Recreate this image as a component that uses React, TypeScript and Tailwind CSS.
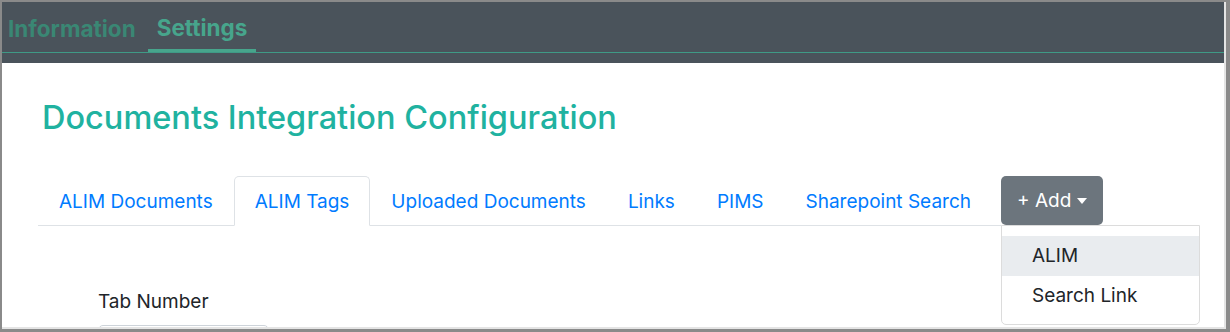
import React from "react";

export default function App() {
  const tabs = ["ALIM Documents", "ALIM Tags", "Uploaded Documents", "Links", "PIMS", "Sharepoint Search"];
  return (
    <div className="w-[1230px] h-[332px] overflow-hidden bg-[#8a8a8a] pl-[2px] pt-[2px] pr-[4px] pb-[3px]" style={{ fontFamily: "Inter, 'Noto Sans', sans-serif" }}>
      <div className="h-full bg-white border-r-2 border-b-2 border-[#e4e4e4] overflow-hidden flex flex-col">
        <div className="h-[61px] bg-[#4a535b] shrink-0 flex flex-col">
          <div className="h-[51px] flex items-end border-b border-[#3f9a86]">
            <div className="pl-[6px] pr-[12px] h-[51px] pt-[5px] flex items-center text-[22.5px] font-bold text-[#3a8774]">Information</div>
            <div className="h-[51px] flex flex-col">
              <div className="flex-1 pt-[5px] flex items-center px-[9px] text-[22.5px] font-bold text-[#47a58c]">Settings</div>
              <div className="h-[3px] bg-[#47a58c] w-[108px]"></div>
            </div>
          </div>
        </div>
        <div className="pl-[36px] pt-[35px] flex flex-col">
          <h1 className="text-[32.5px] font-medium text-[#20b2a0] leading-[40px] pl-[4px]">Documents Integration Configuration</h1>
          <div className="mt-[38px] flex items-end w-fit border-b border-[#dee2e6]">
            {tabs.map((t, i) => (
              <div
                key={t}
                className={
                  "h-[50px] px-[20px] pt-[2px] flex items-center text-[19px] text-[#007bff] -mb-px border rounded-t-[5px] " +
                  (i === 1 ? "border-[#dee2e6] border-b-white bg-white" : "border-transparent")
                }
              >
                {t}
              </div>
            ))}
            <div className="relative ml-[9px]">
              <div className="h-[49px] w-[102px] bg-[#6c757d] rounded-[5px] flex items-center pl-[16px] pt-[1px] text-white text-[19px]">
                <span>+ Add</span>
                <svg width="10" height="6" viewBox="0 0 10 6" className="ml-[6px]"><path d="M0 0 L10 0 L5 6 Z" fill="white" /></svg>
              </div>
              <div className="absolute left-0 top-[49px] w-[199px] h-[100px] bg-white border border-[#dcdcdc] rounded-b-[5px] pt-[10px] z-10">
                <div className="h-[40px] bg-[#e9ecef] flex items-center pl-[30px] text-[19px] text-[#212529]">ALIM</div>
                <div className="h-[40px] flex items-center pl-[30px] text-[19px] text-[#212529]">Search Link</div>
              </div>
            </div>
          </div>
          <div className="pl-[60px] mt-[62px] text-[19px] text-[#212529] leading-[27px]">Tab Number</div>
          <div className="ml-[60px] mt-[10px] w-[171px] h-[38px] border border-[#ced4da] rounded-[5px]"></div>
        </div>
      </div>
    </div>
  );
}
